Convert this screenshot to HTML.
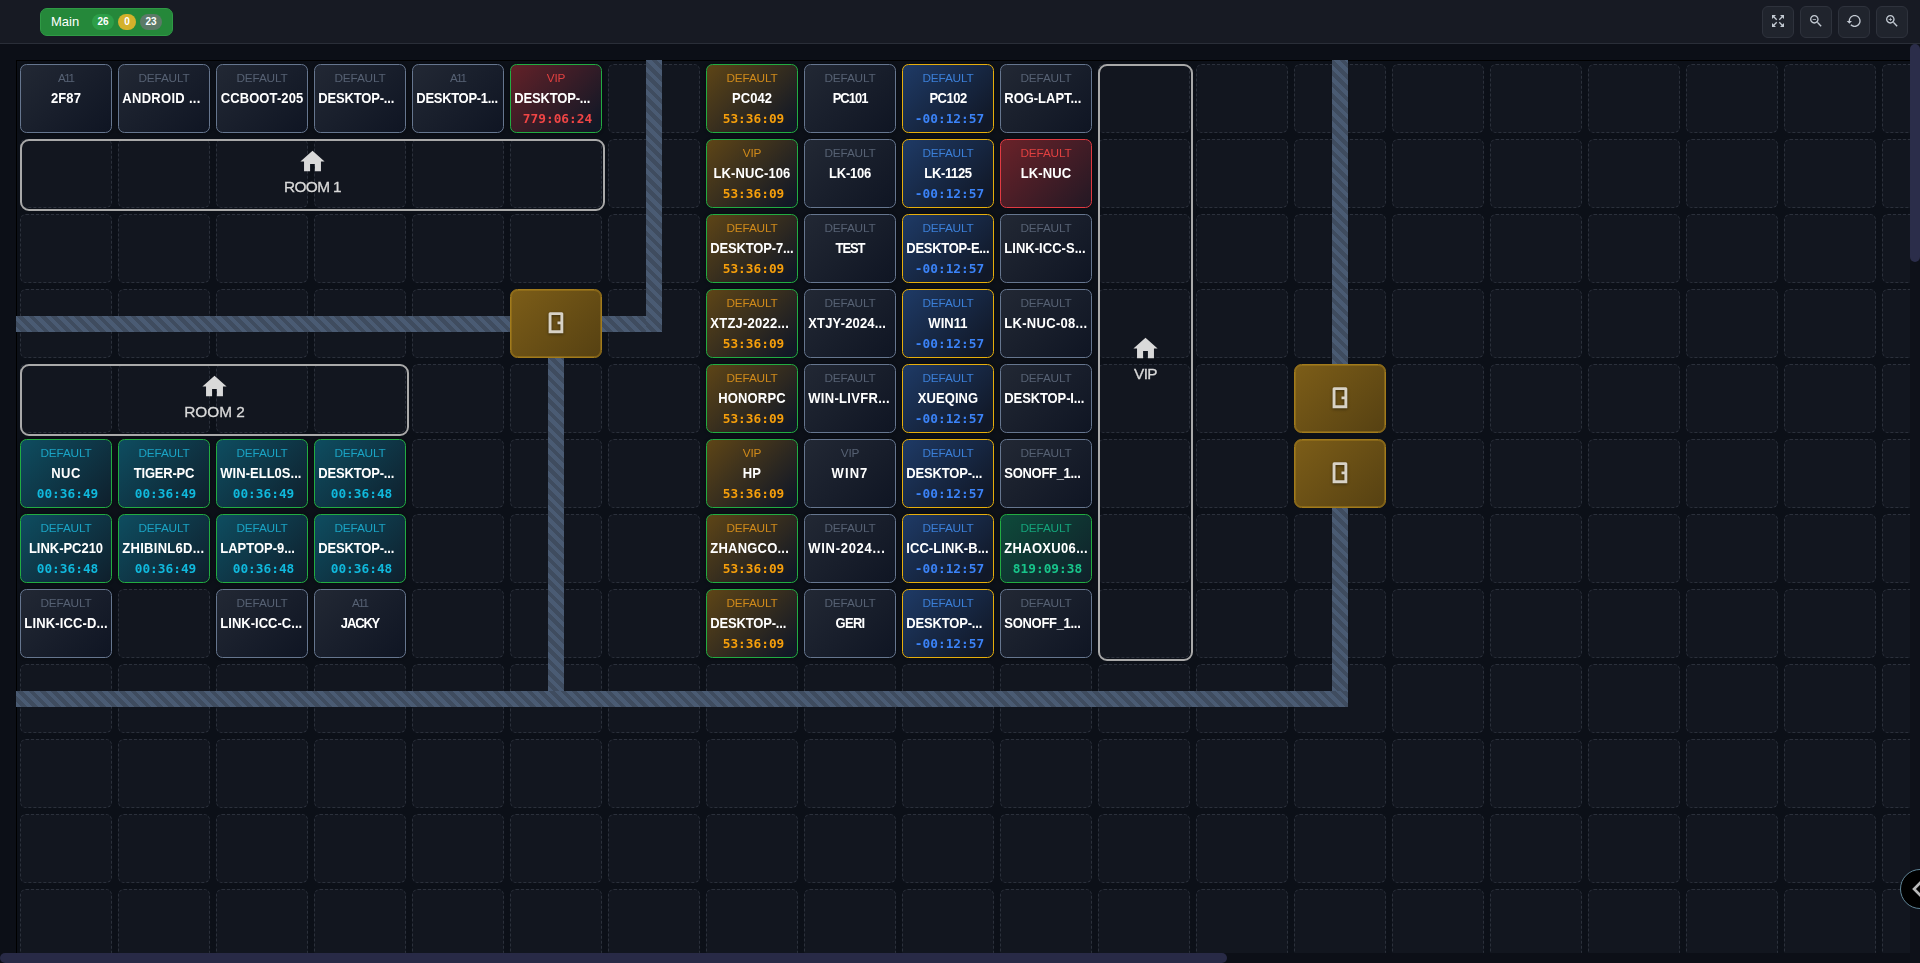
<!DOCTYPE html>
<html lang="en"><head><meta charset="utf-8"><title>Main</title>
<style>
*{box-sizing:border-box}
html,body{margin:0;padding:0}
body{width:1920px;height:963px;overflow:hidden;background:#0c0f17;font-family:"Liberation Sans",sans-serif;position:relative}
.hd{position:absolute;left:0;top:0;width:1920px;height:44px;background:#171a23;border-bottom:1px solid #2a2e38}
.pill{position:absolute;left:40px;top:8px;width:133px;height:28px;border-radius:7px;background:#25883a;border:1px solid #2f9a45;color:#fff}
.pill .m{position:absolute;left:10px;top:0;line-height:26px;font-size:13px}
.bd{position:absolute;top:5px;height:16px;border-radius:8px;font-size:10px;font-weight:bold;line-height:16px;text-align:center;color:#fff}
.btn{position:absolute;top:6px;width:32px;height:32px;border-radius:6px;background:#20242d;border:1px solid #2e323c;color:#c3cad3}
.btn svg{position:absolute;left:7px;top:6px}
.vp{position:absolute;left:0;top:44px;width:1910px;height:909px;overflow:hidden;background:#0c0f17}
.map{will-change:transform;position:absolute;left:16px;top:16px;width:2400px;height:1200px;border:1px solid #000;background:#0c1018}
.e{position:absolute;width:92px;height:69px;border:1px dashed #2b303b;border-radius:6px;background:#12161f}
.w{position:absolute;background:repeating-linear-gradient(45deg,#4a5b73 0,#4a5b73 4px,#3f4c5f 4px,#3f4c5f 8px)}
.c{position:absolute;width:92px;height:69px;border:1px solid #64748b;border-radius:6.5px;padding:6px 3px 0;text-align:center;color:#fff;overflow:hidden;box-shadow:0 0 3px rgba(0,0,0,.5)}
.l{font-size:11.8px;line-height:14px;height:14px;letter-spacing:-.15px}
.l.a{letter-spacing:-1.5px;font-size:11.6px;position:relative;top:0;left:-.3px}
.n{font-size:13px;letter-spacing:-.1px;transform:scaleY(1.12);transform-origin:50% 80%;font-weight:bold;line-height:16px;margin-top:5.5px;white-space:nowrap}
.n.tr{text-align:left;margin-left:.3px}
.t{font-family:"DejaVu Sans Mono","Liberation Mono",monospace;font-weight:bold;font-size:12.8px;line-height:16px;margin-top:4px;padding-left:3px}
.kg{background:linear-gradient(135deg,#222834,#0f1523);border-color:#66768f}.kg .l{color:#566173}
.ko{background:linear-gradient(135deg,#5e4516,#121826 92%);border-color:#22ac42}.ko .l{color:#d08a1a}.ko .t{color:#f59e0b}
.kb{background:linear-gradient(135deg,#1e3a66,#111827 90%);border-color:#e6ae0c}.kb .l{color:#3b7fd8}.kb .t{color:#3b82f6}
.kt{background:linear-gradient(135deg,#0e4d60,#0f1f2c);border-color:#22ac42}.kt .l{color:#1aa3c4}.kt .t{color:#10b8dc}
.kr{background:linear-gradient(135deg,#6a2229,#231824);border-color:#e03a42}.kr .l{color:#e04040}
.kv{background:linear-gradient(135deg,#632128,#121826 92%);border-color:#22ac42}.kv .l{color:#e04040}.kv .t{color:#f04545}
.kn{background:linear-gradient(135deg,#0e4a3a,#10202a);border-color:#22ac42}.kn .l{color:#14a37a}.kn .t{color:#18c48a}
.d{position:absolute;width:92px;height:69px;border:1px solid #a27b1c;border-radius:7.5px;background:linear-gradient(135deg,#7c5d18,#564112);box-shadow:inset 0 0 0 1px rgba(160,122,28,.55);color:#d8d2c6}
.d svg{position:absolute;left:37px;top:21.6px;filter:drop-shadow(0 1px 1.5px rgba(0,0,0,.45))}
.rm{position:absolute;border:2px solid #a9a9a9;border-radius:9px;color:#d9d9d9;text-align:center}
.rm svg{position:absolute;left:50%;top:50%;margin-left:-14.5px;margin-top:-28px}
.rm span{position:absolute;left:0;right:0;top:50%;margin-top:3px;font-size:15.4px;line-height:18px;letter-spacing:-.6px;-webkit-text-stroke:.3px #d9d9d9}
.rm.od svg{margin-top:-28.5px}.rm.od span{margin-top:2.5px}
.sv{position:absolute;left:1910px;top:44px;width:10px;height:218px;border-radius:5px;background:#2b2d4a}
.sh{position:absolute;left:0;top:953px;width:1227px;height:10px;border-radius:5px;background:#282a46}
.fab{position:absolute;left:1900px;top:869px;width:40px;height:40px;border-radius:20px;background:#000;border:1px solid #5f8496}
</style></head><body>
<div class="vp"><div class="map">
<div class="e" style="left:591px;top:3px"></div>
<div class="e" style="left:1081px;top:3px"></div>
<div class="e" style="left:1179px;top:3px"></div>
<div class="e" style="left:1277px;top:3px"></div>
<div class="e" style="left:1375px;top:3px"></div>
<div class="e" style="left:1473px;top:3px"></div>
<div class="e" style="left:1571px;top:3px"></div>
<div class="e" style="left:1669px;top:3px"></div>
<div class="e" style="left:1767px;top:3px"></div>
<div class="e" style="left:1865px;top:3px"></div>
<div class="e" style="left:3px;top:78px"></div>
<div class="e" style="left:101px;top:78px"></div>
<div class="e" style="left:199px;top:78px"></div>
<div class="e" style="left:297px;top:78px"></div>
<div class="e" style="left:395px;top:78px"></div>
<div class="e" style="left:493px;top:78px"></div>
<div class="e" style="left:591px;top:78px"></div>
<div class="e" style="left:1081px;top:78px"></div>
<div class="e" style="left:1179px;top:78px"></div>
<div class="e" style="left:1277px;top:78px"></div>
<div class="e" style="left:1375px;top:78px"></div>
<div class="e" style="left:1473px;top:78px"></div>
<div class="e" style="left:1571px;top:78px"></div>
<div class="e" style="left:1669px;top:78px"></div>
<div class="e" style="left:1767px;top:78px"></div>
<div class="e" style="left:1865px;top:78px"></div>
<div class="e" style="left:3px;top:153px"></div>
<div class="e" style="left:101px;top:153px"></div>
<div class="e" style="left:199px;top:153px"></div>
<div class="e" style="left:297px;top:153px"></div>
<div class="e" style="left:395px;top:153px"></div>
<div class="e" style="left:493px;top:153px"></div>
<div class="e" style="left:591px;top:153px"></div>
<div class="e" style="left:1081px;top:153px"></div>
<div class="e" style="left:1179px;top:153px"></div>
<div class="e" style="left:1277px;top:153px"></div>
<div class="e" style="left:1375px;top:153px"></div>
<div class="e" style="left:1473px;top:153px"></div>
<div class="e" style="left:1571px;top:153px"></div>
<div class="e" style="left:1669px;top:153px"></div>
<div class="e" style="left:1767px;top:153px"></div>
<div class="e" style="left:1865px;top:153px"></div>
<div class="e" style="left:3px;top:228px"></div>
<div class="e" style="left:101px;top:228px"></div>
<div class="e" style="left:199px;top:228px"></div>
<div class="e" style="left:297px;top:228px"></div>
<div class="e" style="left:395px;top:228px"></div>
<div class="e" style="left:591px;top:228px"></div>
<div class="e" style="left:1081px;top:228px"></div>
<div class="e" style="left:1179px;top:228px"></div>
<div class="e" style="left:1277px;top:228px"></div>
<div class="e" style="left:1375px;top:228px"></div>
<div class="e" style="left:1473px;top:228px"></div>
<div class="e" style="left:1571px;top:228px"></div>
<div class="e" style="left:1669px;top:228px"></div>
<div class="e" style="left:1767px;top:228px"></div>
<div class="e" style="left:1865px;top:228px"></div>
<div class="e" style="left:3px;top:303px"></div>
<div class="e" style="left:101px;top:303px"></div>
<div class="e" style="left:199px;top:303px"></div>
<div class="e" style="left:297px;top:303px"></div>
<div class="e" style="left:395px;top:303px"></div>
<div class="e" style="left:493px;top:303px"></div>
<div class="e" style="left:591px;top:303px"></div>
<div class="e" style="left:1081px;top:303px"></div>
<div class="e" style="left:1179px;top:303px"></div>
<div class="e" style="left:1375px;top:303px"></div>
<div class="e" style="left:1473px;top:303px"></div>
<div class="e" style="left:1571px;top:303px"></div>
<div class="e" style="left:1669px;top:303px"></div>
<div class="e" style="left:1767px;top:303px"></div>
<div class="e" style="left:1865px;top:303px"></div>
<div class="e" style="left:395px;top:378px"></div>
<div class="e" style="left:493px;top:378px"></div>
<div class="e" style="left:591px;top:378px"></div>
<div class="e" style="left:1081px;top:378px"></div>
<div class="e" style="left:1179px;top:378px"></div>
<div class="e" style="left:1375px;top:378px"></div>
<div class="e" style="left:1473px;top:378px"></div>
<div class="e" style="left:1571px;top:378px"></div>
<div class="e" style="left:1669px;top:378px"></div>
<div class="e" style="left:1767px;top:378px"></div>
<div class="e" style="left:1865px;top:378px"></div>
<div class="e" style="left:395px;top:453px"></div>
<div class="e" style="left:493px;top:453px"></div>
<div class="e" style="left:591px;top:453px"></div>
<div class="e" style="left:1081px;top:453px"></div>
<div class="e" style="left:1179px;top:453px"></div>
<div class="e" style="left:1277px;top:453px"></div>
<div class="e" style="left:1375px;top:453px"></div>
<div class="e" style="left:1473px;top:453px"></div>
<div class="e" style="left:1571px;top:453px"></div>
<div class="e" style="left:1669px;top:453px"></div>
<div class="e" style="left:1767px;top:453px"></div>
<div class="e" style="left:1865px;top:453px"></div>
<div class="e" style="left:101px;top:528px"></div>
<div class="e" style="left:395px;top:528px"></div>
<div class="e" style="left:493px;top:528px"></div>
<div class="e" style="left:591px;top:528px"></div>
<div class="e" style="left:1081px;top:528px"></div>
<div class="e" style="left:1179px;top:528px"></div>
<div class="e" style="left:1277px;top:528px"></div>
<div class="e" style="left:1375px;top:528px"></div>
<div class="e" style="left:1473px;top:528px"></div>
<div class="e" style="left:1571px;top:528px"></div>
<div class="e" style="left:1669px;top:528px"></div>
<div class="e" style="left:1767px;top:528px"></div>
<div class="e" style="left:1865px;top:528px"></div>
<div class="e" style="left:3px;top:603px"></div>
<div class="e" style="left:101px;top:603px"></div>
<div class="e" style="left:199px;top:603px"></div>
<div class="e" style="left:297px;top:603px"></div>
<div class="e" style="left:395px;top:603px"></div>
<div class="e" style="left:493px;top:603px"></div>
<div class="e" style="left:591px;top:603px"></div>
<div class="e" style="left:689px;top:603px"></div>
<div class="e" style="left:787px;top:603px"></div>
<div class="e" style="left:885px;top:603px"></div>
<div class="e" style="left:983px;top:603px"></div>
<div class="e" style="left:1081px;top:603px"></div>
<div class="e" style="left:1179px;top:603px"></div>
<div class="e" style="left:1277px;top:603px"></div>
<div class="e" style="left:1375px;top:603px"></div>
<div class="e" style="left:1473px;top:603px"></div>
<div class="e" style="left:1571px;top:603px"></div>
<div class="e" style="left:1669px;top:603px"></div>
<div class="e" style="left:1767px;top:603px"></div>
<div class="e" style="left:1865px;top:603px"></div>
<div class="e" style="left:3px;top:678px"></div>
<div class="e" style="left:101px;top:678px"></div>
<div class="e" style="left:199px;top:678px"></div>
<div class="e" style="left:297px;top:678px"></div>
<div class="e" style="left:395px;top:678px"></div>
<div class="e" style="left:493px;top:678px"></div>
<div class="e" style="left:591px;top:678px"></div>
<div class="e" style="left:689px;top:678px"></div>
<div class="e" style="left:787px;top:678px"></div>
<div class="e" style="left:885px;top:678px"></div>
<div class="e" style="left:983px;top:678px"></div>
<div class="e" style="left:1081px;top:678px"></div>
<div class="e" style="left:1179px;top:678px"></div>
<div class="e" style="left:1277px;top:678px"></div>
<div class="e" style="left:1375px;top:678px"></div>
<div class="e" style="left:1473px;top:678px"></div>
<div class="e" style="left:1571px;top:678px"></div>
<div class="e" style="left:1669px;top:678px"></div>
<div class="e" style="left:1767px;top:678px"></div>
<div class="e" style="left:1865px;top:678px"></div>
<div class="e" style="left:3px;top:753px"></div>
<div class="e" style="left:101px;top:753px"></div>
<div class="e" style="left:199px;top:753px"></div>
<div class="e" style="left:297px;top:753px"></div>
<div class="e" style="left:395px;top:753px"></div>
<div class="e" style="left:493px;top:753px"></div>
<div class="e" style="left:591px;top:753px"></div>
<div class="e" style="left:689px;top:753px"></div>
<div class="e" style="left:787px;top:753px"></div>
<div class="e" style="left:885px;top:753px"></div>
<div class="e" style="left:983px;top:753px"></div>
<div class="e" style="left:1081px;top:753px"></div>
<div class="e" style="left:1179px;top:753px"></div>
<div class="e" style="left:1277px;top:753px"></div>
<div class="e" style="left:1375px;top:753px"></div>
<div class="e" style="left:1473px;top:753px"></div>
<div class="e" style="left:1571px;top:753px"></div>
<div class="e" style="left:1669px;top:753px"></div>
<div class="e" style="left:1767px;top:753px"></div>
<div class="e" style="left:1865px;top:753px"></div>
<div class="e" style="left:3px;top:828px"></div>
<div class="e" style="left:101px;top:828px"></div>
<div class="e" style="left:199px;top:828px"></div>
<div class="e" style="left:297px;top:828px"></div>
<div class="e" style="left:395px;top:828px"></div>
<div class="e" style="left:493px;top:828px"></div>
<div class="e" style="left:591px;top:828px"></div>
<div class="e" style="left:689px;top:828px"></div>
<div class="e" style="left:787px;top:828px"></div>
<div class="e" style="left:885px;top:828px"></div>
<div class="e" style="left:983px;top:828px"></div>
<div class="e" style="left:1081px;top:828px"></div>
<div class="e" style="left:1179px;top:828px"></div>
<div class="e" style="left:1277px;top:828px"></div>
<div class="e" style="left:1375px;top:828px"></div>
<div class="e" style="left:1473px;top:828px"></div>
<div class="e" style="left:1571px;top:828px"></div>
<div class="e" style="left:1669px;top:828px"></div>
<div class="e" style="left:1767px;top:828px"></div>
<div class="e" style="left:1865px;top:828px"></div>
<div class="w" style="left:629px;top:-1px;width:16px;height:272px"></div>
<div class="w" style="left:-1px;top:255px;width:494px;height:16px"></div>
<div class="w" style="left:585px;top:255px;width:44px;height:16px"></div>
<div class="w" style="left:531px;top:297px;width:16px;height:333px"></div>
<div class="w" style="left:-1px;top:630px;width:1332px;height:16px"></div>
<div class="w" style="left:1315px;top:-1px;width:16px;height:304px"></div>
<div class="w" style="left:1315px;top:447px;width:16px;height:183px"></div>
<div class="c kg" style="left:3px;top:3px"><div class="l a">A11</div><div class="n" style="letter-spacing:0.13px">2F87</div></div>
<div class="c kg" style="left:101px;top:3px"><div class="l">DEFAULT</div><div class="n tr" style="letter-spacing:0.29px">ANDROID ...</div></div>
<div class="c kg" style="left:199px;top:3px"><div class="l">DEFAULT</div><div class="n" style="letter-spacing:0.1px">CCBOOT-205</div></div>
<div class="c kg" style="left:297px;top:3px"><div class="l">DEFAULT</div><div class="n tr" style="letter-spacing:-0.18px">DESKTOP-...</div></div>
<div class="c kg" style="left:395px;top:3px"><div class="l a">A11</div><div class="n tr" style="letter-spacing:-0.3px">DESKTOP-1...</div></div>
<div class="c kv" style="left:493px;top:3px"><div class="l">VIP</div><div class="n tr" style="letter-spacing:-0.18px">DESKTOP-...</div><div class="t">779:06:24</div></div>
<div class="c ko" style="left:689px;top:3px"><div class="l">DEFAULT</div><div class="n" style="letter-spacing:0.07px">PC042</div><div class="t">53:36:09</div></div>
<div class="c kg" style="left:787px;top:3px"><div class="l">DEFAULT</div><div class="n" style="letter-spacing:-1.0px">PC101</div></div>
<div class="c kb" style="left:885px;top:3px"><div class="l">DEFAULT</div><div class="n" style="letter-spacing:-0.5px">PC102</div><div class="t">-00:12:57</div></div>
<div class="c kg" style="left:983px;top:3px"><div class="l">DEFAULT</div><div class="n tr" style="letter-spacing:-0.03px">ROG-LAPT...</div></div>
<div class="c ko" style="left:689px;top:78px"><div class="l">VIP</div><div class="n" style="letter-spacing:0.11px">LK-NUC-106</div><div class="t">53:36:09</div></div>
<div class="c kg" style="left:787px;top:78px"><div class="l">DEFAULT</div><div class="n" style="letter-spacing:-0.26px">LK-106</div></div>
<div class="c kb" style="left:885px;top:78px"><div class="l">DEFAULT</div><div class="n" style="letter-spacing:-0.36px">LK-1125</div><div class="t">-00:12:57</div></div>
<div class="c kr" style="left:983px;top:78px"><div class="l">DEFAULT</div><div class="n" style="letter-spacing:0.14px">LK-NUC</div></div>
<div class="c ko" style="left:689px;top:153px"><div class="l">DEFAULT</div><div class="n tr" style="letter-spacing:-0.16px">DESKTOP-7...</div><div class="t">53:36:09</div></div>
<div class="c kg" style="left:787px;top:153px"><div class="l">DEFAULT</div><div class="n" style="letter-spacing:-1.07px">TEST</div></div>
<div class="c kb" style="left:885px;top:153px"><div class="l">DEFAULT</div><div class="n tr" style="letter-spacing:-0.29px">DESKTOP-E...</div><div class="t">-00:12:57</div></div>
<div class="c kg" style="left:983px;top:153px"><div class="l">DEFAULT</div><div class="n tr" style="letter-spacing:0.03px">LINK-ICC-S...</div></div>
<div class="c ko" style="left:689px;top:228px"><div class="l">DEFAULT</div><div class="n tr" style="letter-spacing:0.24px">XTZJ-2022...</div><div class="t">53:36:09</div></div>
<div class="c kg" style="left:787px;top:228px"><div class="l">DEFAULT</div><div class="n tr" style="letter-spacing:0.15px">XTJY-2024...</div></div>
<div class="c kb" style="left:885px;top:228px"><div class="l">DEFAULT</div><div class="n" style="letter-spacing:0.05px">WIN11</div><div class="t">-00:12:57</div></div>
<div class="c kg" style="left:983px;top:228px"><div class="l">DEFAULT</div><div class="n tr" style="letter-spacing:0.3px">LK-NUC-08...</div></div>
<div class="c ko" style="left:689px;top:303px"><div class="l">DEFAULT</div><div class="n" style="letter-spacing:0.18px">HONORPC</div><div class="t">53:36:09</div></div>
<div class="c kg" style="left:787px;top:303px"><div class="l">DEFAULT</div><div class="n tr" style="letter-spacing:0.3px">WIN-LIVFR...</div></div>
<div class="c kb" style="left:885px;top:303px"><div class="l">DEFAULT</div><div class="n" style="letter-spacing:0.07px">XUEQING</div><div class="t">-00:12:57</div></div>
<div class="c kg" style="left:983px;top:303px"><div class="l">DEFAULT</div><div class="n tr" style="letter-spacing:-0.11px">DESKTOP-I...</div></div>
<div class="c kt" style="left:3px;top:378px"><div class="l">DEFAULT</div><div class="n" style="letter-spacing:0.45px">NUC</div><div class="t">00:36:49</div></div>
<div class="c kt" style="left:101px;top:378px"><div class="l">DEFAULT</div><div class="n" style="letter-spacing:-0.23px">TIGER-PC</div><div class="t">00:36:49</div></div>
<div class="c kt" style="left:199px;top:378px"><div class="l">DEFAULT</div><div class="n tr" style="letter-spacing:0.02px">WIN-ELL0S...</div><div class="t">00:36:49</div></div>
<div class="c kt" style="left:297px;top:378px"><div class="l">DEFAULT</div><div class="n tr" style="letter-spacing:-0.18px">DESKTOP-...</div><div class="t">00:36:48</div></div>
<div class="c ko" style="left:689px;top:378px"><div class="l">VIP</div><div class="n" style="letter-spacing:0.2px">HP</div><div class="t">53:36:09</div></div>
<div class="c kg" style="left:787px;top:378px"><div class="l">VIP</div><div class="n" style="letter-spacing:1.1px">WIN7</div></div>
<div class="c kb" style="left:885px;top:378px"><div class="l">DEFAULT</div><div class="n tr" style="letter-spacing:-0.18px">DESKTOP-...</div><div class="t">-00:12:57</div></div>
<div class="c kg" style="left:983px;top:378px"><div class="l">DEFAULT</div><div class="n tr" style="letter-spacing:-0.3px">SONOFF_1...</div></div>
<div class="c kt" style="left:3px;top:453px"><div class="l">DEFAULT</div><div class="n" style="letter-spacing:-0.03px">LINK-PC210</div><div class="t">00:36:48</div></div>
<div class="c kt" style="left:101px;top:453px"><div class="l">DEFAULT</div><div class="n tr" style="letter-spacing:0.28px">ZHIBINL6D...</div><div class="t">00:36:49</div></div>
<div class="c kt" style="left:199px;top:453px"><div class="l">DEFAULT</div><div class="n tr" style="letter-spacing:-0.02px">LAPTOP-9...</div><div class="t">00:36:48</div></div>
<div class="c kt" style="left:297px;top:453px"><div class="l">DEFAULT</div><div class="n tr" style="letter-spacing:-0.18px">DESKTOP-...</div><div class="t">00:36:48</div></div>
<div class="c ko" style="left:689px;top:453px"><div class="l">DEFAULT</div><div class="n tr" style="letter-spacing:0.21px">ZHANGCO...</div><div class="t">53:36:09</div></div>
<div class="c kg" style="left:787px;top:453px"><div class="l">DEFAULT</div><div class="n tr" style="letter-spacing:0.71px">WIN-2024...</div></div>
<div class="c kb" style="left:885px;top:453px"><div class="l">DEFAULT</div><div class="n tr" style="letter-spacing:0.06px">ICC-LINK-B...</div><div class="t">-00:12:57</div></div>
<div class="c kn" style="left:983px;top:453px"><div class="l">DEFAULT</div><div class="n tr" style="letter-spacing:0.31px">ZHAOXU06...</div><div class="t">819:09:38</div></div>
<div class="c kg" style="left:3px;top:528px"><div class="l">DEFAULT</div><div class="n tr" style="letter-spacing:0.14px">LINK-ICC-D...</div></div>
<div class="c kg" style="left:199px;top:528px"><div class="l">DEFAULT</div><div class="n tr" style="letter-spacing:0.02px">LINK-ICC-C...</div></div>
<div class="c kg" style="left:297px;top:528px"><div class="l a">A11</div><div class="n" style="letter-spacing:-1.15px">JACKY</div></div>
<div class="c ko" style="left:689px;top:528px"><div class="l">DEFAULT</div><div class="n tr" style="letter-spacing:-0.18px">DESKTOP-...</div><div class="t">53:36:09</div></div>
<div class="c kg" style="left:787px;top:528px"><div class="l">DEFAULT</div><div class="n" style="letter-spacing:-0.67px">GERI</div></div>
<div class="c kb" style="left:885px;top:528px"><div class="l">DEFAULT</div><div class="n tr" style="letter-spacing:-0.18px">DESKTOP-...</div><div class="t">-00:12:57</div></div>
<div class="c kg" style="left:983px;top:528px"><div class="l">DEFAULT</div><div class="n tr" style="letter-spacing:-0.3px">SONOFF_1...</div></div>
<div class="d" style="left:493px;top:228px"><svg viewBox="0 0 16 22" width="16" height="22"><path fill="currentColor" fill-rule="evenodd" d="M2.100 .2h11.700a1.500 1.500 0 0 1 1.500 1.500v19.500H.6V1.700A1.500 1.500 0 0 1 2.100 .2zM3.500 3.100v15.100h8.900V3.100zM9.500 9.500h2.900v2.800H9.500z"/></svg></div>
<div class="d" style="left:1277px;top:303px"><svg viewBox="0 0 16 22" width="16" height="22"><path fill="currentColor" fill-rule="evenodd" d="M2.100 .2h11.700a1.500 1.500 0 0 1 1.500 1.500v19.500H.6V1.700A1.500 1.500 0 0 1 2.100 .2zM3.500 3.100v15.100h8.900V3.100zM9.500 9.500h2.900v2.800H9.500z"/></svg></div>
<div class="d" style="left:1277px;top:378px"><svg viewBox="0 0 16 22" width="16" height="22"><path fill="currentColor" fill-rule="evenodd" d="M2.100 .2h11.700a1.500 1.500 0 0 1 1.500 1.500v19.500H.6V1.700A1.500 1.500 0 0 1 2.100 .2zM3.500 3.100v15.100h8.900V3.100zM9.500 9.500h2.900v2.800H9.500z"/></svg></div>
<div class="rm" style="left:3px;top:78px;width:585px;height:72px"><svg viewBox="0 0 24 24" width="29" height="29"><path fill="currentColor" d="M10 20v-6h4v6h5v-8h3L12 3 2 12h3v8z"/></svg><span>ROOM 1</span></div>
<div class="rm" style="left:3px;top:303px;width:389px;height:72px"><svg viewBox="0 0 24 24" width="29" height="29"><path fill="currentColor" d="M10 20v-6h4v6h5v-8h3L12 3 2 12h3v8z"/></svg><span style="letter-spacing:-.05px">ROOM 2</span></div>
<div class="rm od" style="left:1081px;top:3px;width:95px;height:597px"><svg viewBox="0 0 24 24" width="29" height="29"><path fill="currentColor" d="M10 20v-6h4v6h5v-8h3L12 3 2 12h3v8z"/></svg><span>VIP</span></div>
</div></div>
<div class="hd">
<div class="pill"><span class="m">Main</span><span class="bd" style="left:51px;width:22px;background:#2d9e48">26</span><span class="bd" style="left:77px;width:18px;background:#d4b12b">0</span><span class="bd" style="left:99px;width:22px;background:#5c7a68">23</span></div>
<div class="btn" style="left:1762px"><svg viewBox="0 0 24 24" width="16" height="16"><path fill="currentColor" d="M15 3l2.3 2.3-4.100 4.100 1.420 1.420L18.700 6.700 21 9V3zM3 9l2.300-2.300 4.100 4.100 1.420-1.420L6.700 5.300 9 3H3zM9 21l-2.300-2.300 4.100-4.100-1.420-1.420L5.300 17.300 3 15v6zM21 15l-2.300 2.300-4.100-4.100-1.420 1.420L17.300 18.700 15 21h6z"/></svg></div>
<div class="btn" style="left:1800px"><svg viewBox="0 0 24 24" width="16" height="16"><path fill="currentColor" d="M15.5 14h-.79l-.28-.27C15.41 12.59 16 11.11 16 9.5 16 5.91 13.09 3 9.500 3S3 5.910 3 9.500 5.910 16 9.500 16c1.610 0 3.090-.59 4.230-1.570l.27.28v.79l5 4.990L20.490 19l-4.990-5zm-6 0C7.010 14 5 11.990 5 9.500S7.010 5 9.500 5 14 7.010 14 9.500 11.990 14 9.500 14zM7 9h5v1H7z"/></svg></div>
<div class="btn" style="left:1838px"><svg viewBox="0 0 24 24" width="16" height="16"><path fill="currentColor" d="M13 3c-4.970 0-9 4.030-9 9H1l3.890 3.890.070.140L9 12H6c0-3.870 3.130-7 7-7s7 3.130 7 7-3.130 7-7 7c-1.930 0-3.680-.790-4.940-2.060l-1.420 1.420C8.270 19.990 10.510 21 13 21c4.970 0 9-4.030 9-9s-4.030-9-9-9z"/></svg></div>
<div class="btn" style="left:1876px"><svg viewBox="0 0 24 24" width="16" height="16"><path fill="currentColor" d="M15.5 14h-.79l-.28-.27C15.41 12.59 16 11.11 16 9.500 16 5.910 13.090 3 9.500 3S3 5.910 3 9.500 5.910 16 9.500 16c1.610 0 3.090-.59 4.230-1.570l.27.28v.79l5 4.990L20.490 19l-4.990-5zm-6 0C7.010 14 5 11.990 5 9.500S7.010 5 9.500 5 14 7.010 14 9.500 11.990 14 9.500 14zm2.500-4h-2v2H9v-2H7V9h2V7h1v2h2v1z"/></svg></div>
</div>
<div style="position:absolute;left:1910px;top:44px;width:10px;height:919px;background:#0e1119"></div><div class="sv"></div><div class="sh"></div>
<div class="fab"><svg viewBox="0 0 24 24" width="24" height="24" style="position:absolute;left:5px;top:7px"><path fill="none" stroke="#b8b8b8" stroke-width="2.6" d="M15 5l-7 7 7 7"/></svg></div>
</body></html>
